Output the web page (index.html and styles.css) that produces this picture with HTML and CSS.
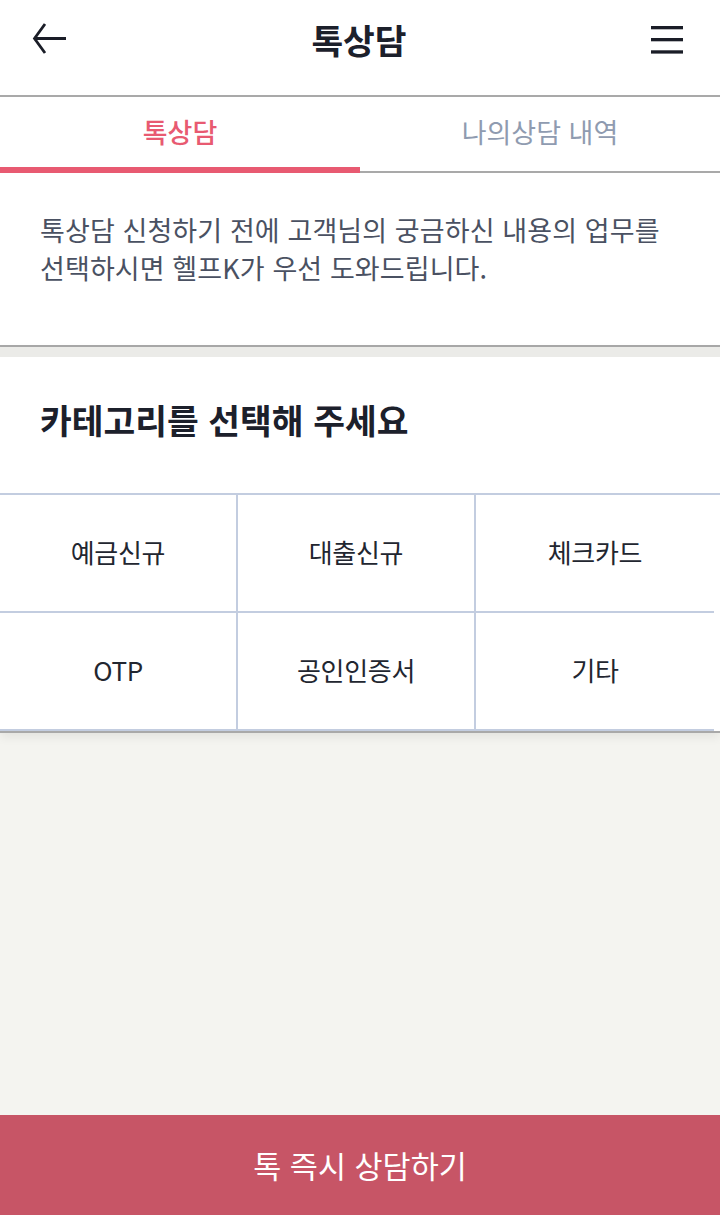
FILE: index.html
```html
<!DOCTYPE html>
<html lang="ko">
    <head>
        <title>톡상담</title>
        <meta charset="UTF-8">
        <meta name="viewport" content="width=device-width, initial-scale=1.0">
        <link rel="stylesheet" href="styles.css">
    </head>
    <body>
        <div class="page">
            <header class="topbar">
                <a class="icon-btn" href="#">
                    <svg width="36" height="36" viewBox="0 0 36 36">
                        <path d="M34 15.5H3.5M13 1L2.5 15.5L13 30" fill="none" stroke="#1a1d27" stroke-width="2.8"/>
                    </svg>
                </a>
                <h1 class="title">톡상담</h1>
                <a class="icon-btn" href="#">
                    <svg width="34" height="30" viewBox="0 0 34 30">
                        <rect x="0" y="0" width="32" height="3.3" fill="#1a1d27"/>
                        <rect x="0" y="12" width="32" height="3.3" fill="#1a1d27"/>
                        <rect x="0" y="24.3" width="32" height="3.3" fill="#1a1d27"/>
                    </svg>
                </a>
            </header>

            <nav class="tabs">
                <a class="tab active" href="#">톡상담</a>
                <a class="tab" href="#">나의상담 내역</a>
            </nav>

            <section class="intro">
                <p>톡상담 신청하기 전에 고객님의 궁금하신 내용의 업무를<br>선택하시면 헬프K가 우선 도와드립니다.</p>
            </section>

            <section class="category">
                <h2>카테고리를 선택해 주세요</h2>
                <div class="grid">
                    <a class="cell" href="#">예금신규</a>
                    <a class="cell" href="#">대출신규</a>
                    <a class="cell" href="#">체크카드</a>
                    <a class="cell" href="#">OTP</a>
                    <a class="cell" href="#">공인인증서</a>
                    <a class="cell" href="#">기타</a>
                </div>
            </section>

            <div class="spacer"></div>

            <a class="cta" href="#">톡 즉시 상담하기</a>
        </div>
    </body>
</html>
```

FILE: styles.css
```css
body{
    margin: 0px;
    background-color: #f4f4f0;
    font-family: "Noto Sans CJK KR", "Noto Sans", sans-serif;
    color: #1c202b;
}
a{
    text-decoration: none;
    color: inherit;
}
.page{
    display: flex;
    flex-direction: column;
    min-height: 100vh;
}
.topbar{
    display: flex;
    align-items: center;
    justify-content: space-between;
    padding: 0px 34px 14px 32px;
    height: 81px;
    background: #fff;
    border-bottom: 2px solid #a9a9a9;
}
.icon-btn{
    display: flex;
    width: 36px;
    justify-content: center;
}
.title{
    margin: 0px 0px 3px 0px;
    font-size: 34.5px;
    font-weight: bold;
    line-height: 1;
}
.tabs{
    display: flex;
    background: #fff;
    border-bottom: 2px solid #a9a9a9;
}
.tab{
    flex: 1;
    height: 76px;
    margin-bottom: -2px;
    padding-bottom: 8px;
    box-sizing: border-box;
    display: flex;
    align-items: center;
    justify-content: center;
    font-size: 27px;
    color: #8f9bb0;
}
.tab.active{
    color: #e85a71;
    font-weight: 500;
    border-bottom: 6px solid #e85a71;
    padding-bottom: 2px;
}
.intro{
    background: #fff;
    padding: 38px 40px 0px 40px;
    height: 174px;
    box-sizing: border-box;
    border-bottom: 2px solid #a9a9a9;
}
.intro p{
    margin: 0px;
    font-size: 27px;
    line-height: 38px;
    color: #4a5162;
    letter-spacing: 0.1px;
}
.category{
    background: #fff;
    border-top: 10px solid #ebebe8;
    border-bottom: 2px solid #a9a9a9;
    box-shadow: 0px 4px 10px rgba(0, 0, 0, 0.07);
}
.category h2{
    margin: 0px;
    padding: 42px 40px 0px 40px;
    height: 138px;
    box-sizing: border-box;
    font-size: 34.5px;
    line-height: 40px;
    font-weight: bold;
    border-bottom: 2px solid #c3cde0;
}
.grid{
    display: grid;
    grid-template-columns: 238px 238px 238px;
}
.cell{
    height: 118px;
    padding-bottom: 4px;
    display: flex;
    align-items: center;
    justify-content: center;
    font-size: 26px;
    color: #222630;
    letter-spacing: -0.3px;
    border-bottom: 2px solid #c3cde0;
    border-right: 2px solid #c3cde0;
    box-sizing: border-box;
}
.cell:nth-child(3n){
    border-right: none;
}
.spacer{
    flex: 1;
}
.cta{
    height: 100px;
    display: flex;
    align-items: center;
    justify-content: center;
    background: #c75566;
    color: #fff;
    font-size: 30.5px;
}
```
